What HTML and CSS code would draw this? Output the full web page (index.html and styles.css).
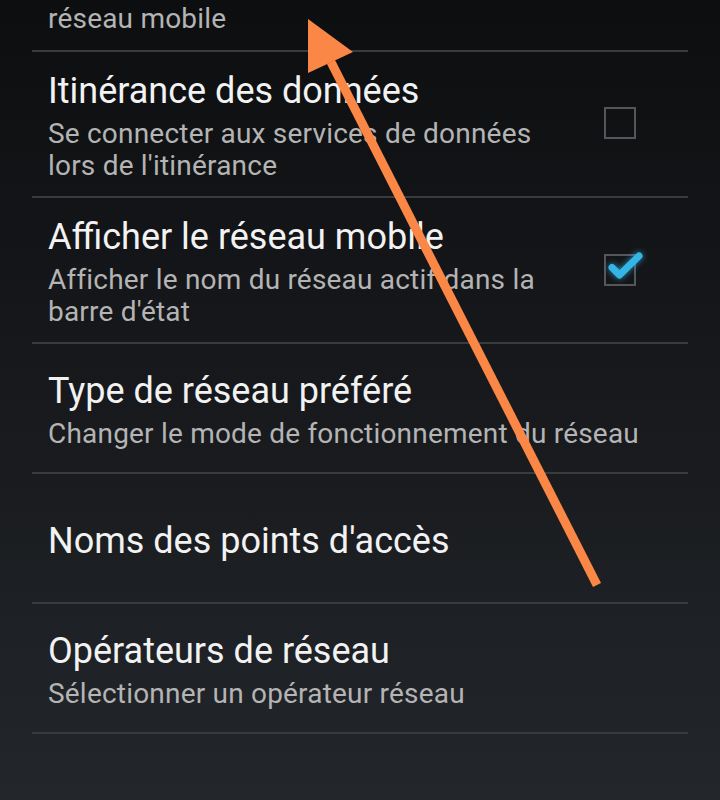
FILE: index.html
```html
<!DOCTYPE html>
<html lang="fr">
  <head>
    <meta charset="utf-8" />
    <title>Réseaux mobiles</title>
    <link rel="stylesheet" href="styles.css">
  </head>
  <body>
    <div class="screen">
      <ul class="prefs">
        <li class="pref pref-cut">
          <div class="pref-text">
            <div class="summary">réseau mobile</div>
          </div>
        </li>
        <li class="pref">
          <div class="pref-text">
            <div class="title">Itinérance des données</div>
            <div class="summary">Se connecter aux services de données lors de l'itinérance</div>
          </div>
          <div class="widget">
            <span class="checkbox"></span>
          </div>
        </li>
        <li class="pref">
          <div class="pref-text">
            <div class="title">Afficher le réseau mobile</div>
            <div class="summary">Afficher le nom du réseau actif dans la barre d'état</div>
          </div>
          <div class="widget">
            <span class="checkbox checked">
              <svg class="tick" width="40" height="32" viewBox="0 0 40 32">
                <path d="M8 13.5 L15.5 21 L35 2" />
              </svg>
            </span>
          </div>
        </li>
        <li class="pref">
          <div class="pref-text">
            <div class="title">Type de réseau préféré</div>
            <div class="summary">Changer le mode de fonctionnement du réseau</div>
          </div>
        </li>
        <li class="pref">
          <div class="pref-text">
            <div class="title">Noms des points d'accès</div>
          </div>
        </li>
        <li class="pref">
          <div class="pref-text">
            <div class="title">Opérateurs de réseau</div>
            <div class="summary">Sélectionner un opérateur réseau</div>
          </div>
        </li>
      </ul>

      <!-- annotation drawn over the screenshot -->
      <svg class="arrow" width="720" height="800" viewBox="0 0 720 800">
        <line x1="597" y1="585" x2="331" y2="62" />
        <polygon points="308,19 353,52 308,73" />
      </svg>
    </div>
  </body>
</html>
```

FILE: styles.css
```css
html,
body {
  margin: 0;
  height: 100%;
}

body {
  background: linear-gradient(to bottom, #0d0e10 0%, #16181b 45%, #23262b 100%);
  font-family: Roboto, "Noto Sans", sans-serif;
  overflow: hidden;
}

.screen {
  position: relative;
  width: 720px;
  height: 800px;
}

.prefs {
  list-style: none;
  margin: 0 32px;
  padding: 0;
}

.pref {
  display: flex;
  align-items: center;
  min-height: 95px;
  padding: 19px 0 14px 16px;
  border-bottom: 2px solid #3a3b3e;
}

.pref-cut {
  min-height: 0;
  padding: 3px 0 15px 16px;
}

.pref-text {
  flex: 1;
  min-width: 0;
}

.title {
  color: #f2f2f2;
  font-size: 36px;
  line-height: 40px;
}

.summary {
  color: #b4b4b4;
  font-size: 28px;
  line-height: 32px;
  letter-spacing: 0.2px;
  margin-top: 7px;
}

.pref-cut .summary {
  margin-top: 0;
}

.widget {
  width: 104px;
  display: flex;
  justify-content: center;
  padding-right: 16px;
}

.checkbox {
  position: relative;
  display: block;
  width: 28px;
  height: 28px;
  border: 2px solid #555659;
  margin-top: -8px;
}

.checkbox.checked {
  margin-top: -6px;
}

.tick {
  position: absolute;
  left: -2px;
  top: -2px;
  overflow: visible;
}

.tick path {
  fill: none;
  stroke: #33b5e5;
  stroke-width: 7;
  stroke-linecap: round;
  stroke-linejoin: round;
  filter: drop-shadow(0 0 3px rgba(51, 181, 229, 0.75));
}

.arrow {
  position: absolute;
  left: 0;
  top: 0;
  pointer-events: none;
}

.arrow line {
  stroke: #fa8745;
  stroke-width: 9;
}

.arrow polygon {
  fill: #fa8745;
}
```
